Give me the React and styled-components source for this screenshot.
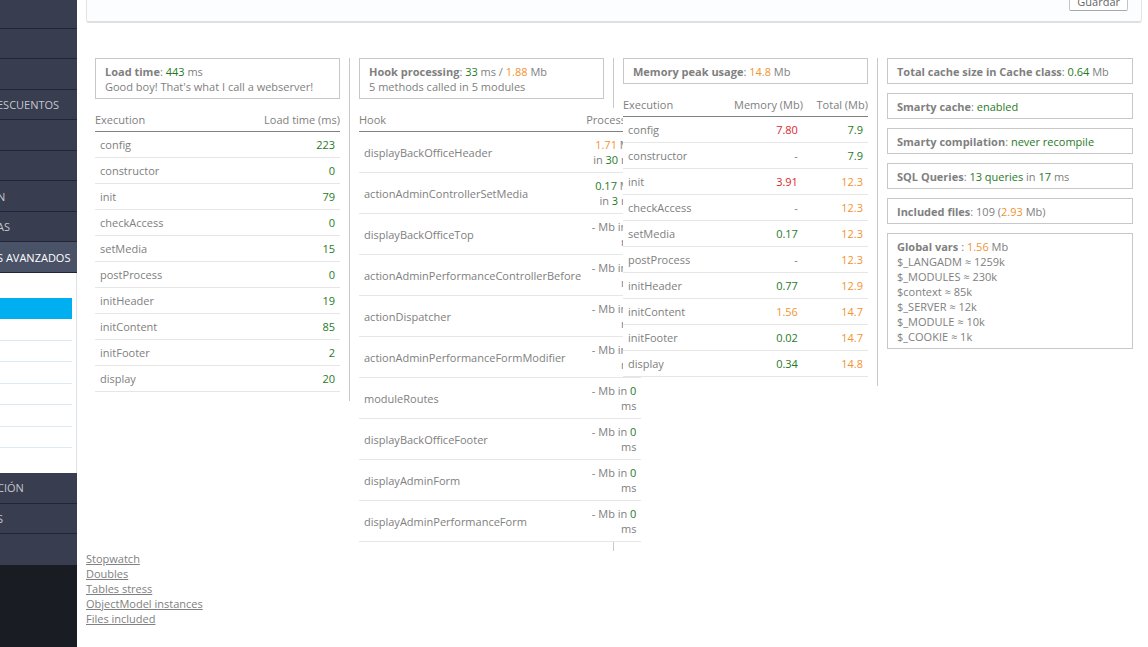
import React from 'react';
import styled, { createGlobalStyle, css } from 'styled-components';

const GlobalStyle = createGlobalStyle`
  * {
    box-sizing: border-box;
  }

  body {
    margin: 0;
    background: #fff;
    color: #808080;
    font-family: 'Open Sans', 'Liberation Sans', sans-serif;
    font-size: 11px;
    line-height: 15px;
  }
`;

const Page = styled.div`
  display: flex;
  min-height: 100vh;
`;

const Sidebar = styled.nav`
  flex: none;
  width: 77px;
  overflow: hidden;
  background: #1a1c24;
`;

const Menu = styled.ul`
  display: grid;
  grid-auto-rows: 1fr;
  height: ${props => props.$height}px;
  margin: ${props => props.$top || 0}px 0 0;
  padding: 0;
  list-style: none;
  background: #383d4f;
`;

const MenuItem = styled.li`
  display: flex;
  align-items: center;
  border-bottom: 1px solid #20253a;
  background: ${props => (props.$active ? '#4a5268' : 'transparent')};

  &:last-child {
    border-bottom-color: ${props => (props.$active ? '#20253a' : 'transparent')};
  }
`;

const MenuLink = styled.a`
  margin-left: -3px;
  color: ${props => (props.$active ? '#fff' : '#c4c6cf')};
  font-size: 11px;
  text-decoration: none;
  white-space: nowrap;
`;

const Submenu = styled.ul`
  display: grid;
  grid-auto-rows: 1fr;
  height: 200px;
  margin: 0;
  padding: 25px 4px 25px 0;
  list-style: none;
  background: #fff;
  border-right: 1px solid #dfe1e6;
`;

const SubmenuItem = styled.li`
  border-bottom: 1px solid #dcebf2;

  ${props => props.$active && css`
    background: #00aff0;
    border-bottom-color: #00aff0;
  `}
`;

const Main = styled.main`
  flex: 1;
  min-width: 0;
  padding: 0 6px 20px 9px;
`;

const Panel = styled.div`
  display: flex;
  justify-content: flex-end;
  margin: -20px 0 35px;
  padding: 10px 13px;
  background: #fcfdfe;
  border: 1px solid #e4e4e6;
  border-bottom: 2px solid #e0e0e2;
  border-radius: 3px;
`;

const SaveButton = styled.button`
  height: 20px;
  padding: 0 7px;
  background: #fff;
  border: 1px solid #c4c4c6;
  border-bottom-color: #a8a8aa;
  border-radius: 2px;
  color: #666;
  font: inherit;
`;

const Columns = styled.div`
  display: grid;
  grid-template-columns: repeat(4, minmax(0, 1fr));
  align-items: start;
`;

const Column = styled.section`
  padding: 0 9px 9px;
  border-right: 1px solid #c8c8c8;

  &:last-child {
    border-right: 0;
  }
`;

const Box = styled.div`
  margin-bottom: 9px;
  padding: 5px 9px 4px;
  border: 1px solid #c8c8c8;
`;

const Table = styled.table`
  width: 100%;
  background: #fff;
  border-collapse: separate;
  border-spacing: 0;
`;

const Th = styled.th`
  padding: 4px 0;
  border-bottom: 1px solid #808080;
  font-weight: normal;
  text-align: ${props => (props.$right ? 'right' : 'left')};
`;

const Td = styled.td`
  padding: 5px;
  border-bottom: 1px solid #e6e6e6;
  text-align: ${props => (props.$right ? 'right' : 'left')};
`;

const tones = {
  green: '#1f7a1f',
  orange: '#f39331',
  red: '#e0262c',
};

const Value = styled.span`
  color: ${props => tones[props.$tone]};
`;

const Links = styled.ul`
  margin: 0;
  padding: 0;
  list-style: none;

  a {
    color: #808080;
  }
`;

const menuTop = ['', '', '', 'ESCUENTOS', '', '', 'N', 'AS'];
const menuBottom = ['CIÓN', 'S', ''];

const loadTimes = [
  ['config', 223],
  ['constructor', 0],
  ['init', 79],
  ['checkAccess', 0],
  ['setMedia', 15],
  ['postProcess', 0],
  ['initHeader', 19],
  ['initContent', 85],
  ['initFooter', 2],
  ['display', 20],
];

const hooks = [
  { name: 'displayBackOfficeHeader', mb: '1.71', tone: 'orange', ms: 30 },
  { name: 'actionAdminControllerSetMedia', mb: '0.17', tone: 'green', ms: 3 },
  { name: 'displayBackOfficeTop', mb: '-', ms: 0 },
  { name: 'actionAdminPerformanceControllerBefore', mb: '-', ms: 0 },
  { name: 'actionDispatcher', mb: '-', ms: 0 },
  { name: 'actionAdminPerformanceFormModifier', mb: '-', ms: 0 },
  { name: 'moduleRoutes', mb: '-', ms: 0 },
  { name: 'displayBackOfficeFooter', mb: '-', ms: 0 },
  { name: 'displayAdminForm', mb: '-', ms: 0 },
  { name: 'displayAdminPerformanceForm', mb: '-', ms: 0 },
];

const memory = [
  ['config', '7.80', 'red', '7.9', 'green'],
  ['constructor', '-', '', '7.9', 'green'],
  ['init', '3.91', 'red', '12.3', 'orange'],
  ['checkAccess', '-', '', '12.3', 'orange'],
  ['setMedia', '0.17', 'green', '12.3', 'orange'],
  ['postProcess', '-', '', '12.3', 'orange'],
  ['initHeader', '0.77', 'green', '12.9', 'orange'],
  ['initContent', '1.56', 'orange', '14.7', 'orange'],
  ['initFooter', '0.02', 'green', '14.7', 'orange'],
  ['display', '0.34', 'green', '14.8', 'orange'],
];

const globalVars = [
  ['$_LANGADM', '1259k'],
  ['$_MODULES', '230k'],
  ['$context', '85k'],
  ['$_SERVER', '12k'],
  ['$_MODULE', '10k'],
  ['$_COOKIE', '1k'],
];

const anchors = [
  ['Stopwatch', '#stopwatch'],
  ['Doubles', '#doubles'],
  ['Tables stress', '#tables'],
  ['ObjectModel instances', '#objectModels'],
  ['Files included', '#includedFiles'],
];

function SideMenu() {
  return (
    <Sidebar>
      <Menu $height={275} $top={-2}>
        {menuTop.map((label, i) => (
          <MenuItem key={i}>{label && <MenuLink href="#">{label}</MenuLink>}</MenuItem>
        ))}
        <MenuItem $active>
          <MenuLink href="#" $active>S AVANZADOS</MenuLink>
        </MenuItem>
      </Menu>
      <Submenu>
        <SubmenuItem $active />
        {[1, 2, 3, 4, 5, 6].map(i => <SubmenuItem key={i} />)}
      </Submenu>
      <Menu $height={92}>
        {menuBottom.map((label, i) => (
          <MenuItem key={i}>{label && <MenuLink href="#">{label}</MenuLink>}</MenuItem>
        ))}
      </Menu>
    </Sidebar>
  );
}

function LoadTimeColumn() {
  return (
    <Column>
      <Box>
        <b>Load time</b>: <Value $tone="green">443</Value> ms
        <br />
        Good boy! That's what I call a webserver!
      </Box>
      <Table>
        <thead>
          <tr>
            <Th>Execution</Th>
            <Th $right>Load time (ms)</Th>
          </tr>
        </thead>
        <tbody>
          {loadTimes.map(([name, ms]) => (
            <tr key={name}>
              <Td>{name}</Td>
              <Td $right><Value $tone="green">{ms}</Value></Td>
            </tr>
          ))}
        </tbody>
      </Table>
    </Column>
  );
}

function HookColumn() {
  return (
    <Column>
      <Box>
        <b>Hook processing</b>: <Value $tone="green">33</Value> ms / <Value $tone="orange">1.88</Value> Mb
        <br />
        5 methods called in 5 modules
      </Box>
      <Table>
        <thead>
          <tr>
            <Th>Hook</Th>
            <Th $right>Processing</Th>
          </tr>
        </thead>
        <tbody>
          {hooks.map(hook => (
            <tr key={hook.name}>
              <Td>{hook.name}</Td>
              <Td $right>
                <Value $tone={hook.tone}>{hook.mb}</Value> Mb in <Value $tone="green">{hook.ms}</Value> ms
              </Td>
            </tr>
          ))}
        </tbody>
      </Table>
    </Column>
  );
}

function MemoryColumn() {
  return (
    <Column>
      <Box>
        <b>Memory peak usage</b>: <Value $tone="orange">14.8</Value> Mb
      </Box>
      <Table>
        <thead>
          <tr>
            <Th>Execution</Th>
            <Th $right>Memory (Mb)</Th>
            <Th $right>Total (Mb)</Th>
          </tr>
        </thead>
        <tbody>
          {memory.map(([name, used, usedTone, total, totalTone]) => (
            <tr key={name}>
              <Td>{name}</Td>
              <Td $right><Value $tone={usedTone}>{used}</Value></Td>
              <Td $right><Value $tone={totalTone}>{total}</Value></Td>
            </tr>
          ))}
        </tbody>
      </Table>
    </Column>
  );
}

function SummaryColumn() {
  return (
    <Column>
      <Box><b>Total cache size in Cache class</b>: <Value $tone="green">0.64</Value> Mb</Box>
      <Box><b>Smarty cache</b>: <Value $tone="green">enabled</Value></Box>
      <Box><b>Smarty compilation</b>: <Value $tone="green">never recompile</Value></Box>
      <Box>
        <b>SQL Queries</b>: <Value $tone="green">13 queries</Value> in <Value $tone="green">17</Value> ms
      </Box>
      <Box><b>Included files</b>: 109 (<Value $tone="orange">2.93</Value> Mb)</Box>
      <Box>
        <b>Global vars</b> : <Value $tone="orange">1.56</Value> Mb
        {globalVars.map(([name, size]) => (
          <div key={name}>{name} ≈ {size}</div>
        ))}
      </Box>
    </Column>
  );
}

function App() {
  return (
    <>
      <GlobalStyle />
      <Page>
        <SideMenu />
        <Main>
          <Panel>
            <SaveButton type="button">Guardar</SaveButton>
          </Panel>
          <Columns>
            <LoadTimeColumn />
            <HookColumn />
            <MemoryColumn />
            <SummaryColumn />
          </Columns>
          <Links>
            {anchors.map(([label, href]) => (
              <li key={label}><a href={href}>{label}</a></li>
            ))}
          </Links>
        </Main>
      </Page>
    </>
  );
}

export default App;
